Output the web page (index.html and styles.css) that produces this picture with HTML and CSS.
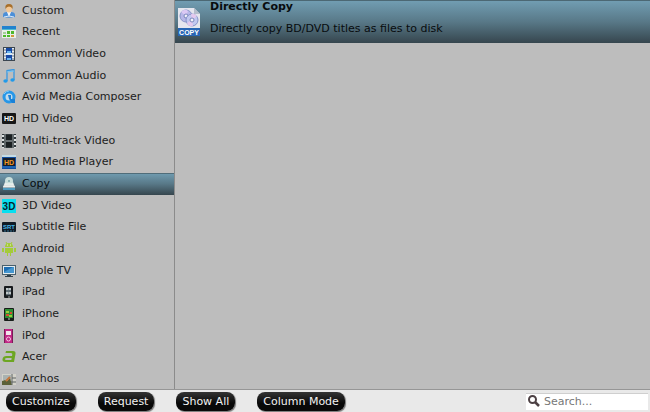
FILE: index.html
```html
<!DOCTYPE html>
<html lang="en">
<head>
  <meta charset="UTF-8">
  <meta name="viewport" content="width=device-width, initial-scale=1.0">
  <title>Output Profiles</title>
  <link rel="stylesheet" href="styles.css">
</head>
<body>
  <div class="content">
    <nav class="sidebar">
      <a href="#custom">
        <svg class="icon" viewBox="0 0 14 14"><path d="M1 13V11q0-3 4-3h4q4 0 4 3v2q-6 1.500-12 0z" fill="#4c8fd8"/><path d="M5 8l2 5 2-5z" fill="#f4f4f4"/><ellipse cx="7" cy="4.500" rx="3" ry="4" fill="#f3c795"/><path d="M3.500 5Q2.500 0 7 0t3.500 5Q9.500 2.500 7 2.500T3.500 5z" fill="#a8702c"/><path d="M2 13q5-2 10 0" stroke="#d6e8fa" fill="none"/></svg>
        Custom</a>
      <a href="#recent">
        <svg class="icon" viewBox="0 0 14 14"><path d="M0 1h14v12H0z" fill="#e9eee9"/><path d="M0 1h14v3H0z" fill="#2182cf"/><path d="M0 4h14v1H0z" fill="#4fbad0"/><path d="M5 6h3v3H5zM9 6h3v3H9zM1 10h3v2H1zM5 10h3v2H5z" fill="#4fb82c"/><path d="M1 7h3v2H1z" fill="#a5cf9a"/><path d="M9 10h3v2H9z" fill="#d2973c"/></svg>
        Recent</a>
      <a href="#video">
        <svg class="icon" viewBox="0 0 14 14"><path d="M1 0h12v14H1z" fill="#3c4651"/><path d="M2 1h2v12H2zM10 1h2v12h-2z" fill="#e8edf2"/><path d="M2 3h2M2 6h2M2 9h2M2 12h2M10 3h2M10 6h2M10 9h2M10 12h2" stroke="#69737d"/><path d="M4 1h6v5H4zM4 8h6v5H4z" fill="#1749a4"/><path d="M5 4h4v2H5zM5 11h4v2H5z" fill="#68b4ee"/><path d="M4 6h6v2H4z" fill="#d5e9fa"/></svg>
        Common Video</a>
      <a href="#audio">
        <svg class="icon" viewBox="0 0 14 14"><path d="M5 12V1.500l7-1V11" fill="none" stroke="#3798e2" stroke-width="1.300"/><path d="M5 3l7-1" stroke="#72c5f7"/><ellipse cx="3.500" cy="12" rx="2.200" ry="1.700" fill="#229ae9"/><ellipse cx="10.500" cy="11" rx="2.200" ry="1.700" fill="#229ae9"/></svg>
        Common Audio</a>
      <a href="#avid">
        <svg class="icon" viewBox="0 0 14 14"><circle cx="7" cy="7" r="5" fill="#c3dcec" stroke="#2797e8" stroke-width="3"/><path d="M6 5h3v4h4v4h-3L7 9z" fill="#1b82d8"/><path d="M2 4q2-3 5-3" stroke="#7ccaf7" fill="none"/></svg>
        Avid Media Composer</a>
      <a href="#hd">
        <svg class="icon" viewBox="0 0 14 14"><rect y="1" width="14" height="11" rx="1" fill="#171717"/><text class="glyph" x="7" y="9" fill="#fff">HD</text></svg>
        HD Video</a>
      <a href="#multi">
        <svg class="icon" viewBox="0 0 14 14"><path d="M0 0h14v14H0z" fill="#30373a"/><path d="M3 0v14M11 0v14" stroke="#929a9b"/><path d="M4 1h6v5H4zM4 8h6v5H4z" fill="#1b2022"/><path d="M4 7h6" stroke="#a3aaab"/><path d="M1 1v13M13 1v13" stroke="#dce0e0" stroke-width="2" stroke-dasharray="2 2"/></svg>
        Multi-track Video</a>
      <a href="#player">
        <svg class="icon" viewBox="0 0 14 14"><path d="M0 0h14v14H0z" fill="#124d9f"/><path d="M0 0h14v2H0z" fill="#c5dce6"/><path d="M1 3h12v8H1z" fill="#171c28"/><path d="M0 12h14" stroke="#287bc8"/><text class="glyph" x="7" y="10" fill="#f19821">HD</text></svg>
        HD Media Player</a>
      <a href="#copy" class="selected">
        <svg class="icon" viewBox="0 0 14 14"><path d="M3 5h8l2 5H1z" fill="#dfe4e2"/><circle cx="7" cy="4" r="4" fill="#c9dfdc"/><circle cx="7" cy="4" r="1" fill="#77a6aa"/><path d="M3 7h8M1 10h12" stroke="#f8faf9"/><path d="M1 12h12" stroke="#4f9cc0" stroke-width="2"/></svg>
        Copy</a>
      <a href="#3d">
        <svg class="icon" viewBox="0 0 14 14"><path d="M0 0h14v14H0z" fill="#08dfef"/><text class="glyph large" x="7" y="11" fill="#06252f">3D</text></svg>
        3D Video</a>
      <a href="#subtitle">
        <svg class="icon" viewBox="0 0 14 14"><rect y="2" width="14" height="10" rx="1" fill="#111b25"/><text class="glyph small" x="7" y="9" fill="#46b7e8">SRT</text><path d="M2 11h10" stroke="#347390" stroke-dasharray="2 1"/></svg>
        Subtitle File</a>
      <a href="#android">
        <svg class="icon" viewBox="0 0 14 14"><path d="M3 5q0-4 4-4t4 4zM3 6h8v5H9v3H8v-3H6v3H5v-3H3zM0 6h2v4H0zM12 6h2v4h-2z" fill="#a4cb39"/><path d="M4 0l1 2M10 0L9 2" stroke="#a4cb39"/><path d="M5 3h1M8 3h1" stroke="#e8f0ce"/></svg>
        Android</a>
      <a href="#appletv">
        <svg class="icon" viewBox="0 0 14 14"><path d="M0 1h14v10H0z" fill="#4a606c"/><path d="M1 2h12v8H1z" fill="#e5ecef"/><path d="M2 3h10v6H2z" fill="#1d6db2"/><path d="M2 8l9-5h1v6H2z" fill="#4596cf"/><path d="M5 11h4v1h2v1H3v-1h2z" fill="#31414a"/></svg>
        Apple TV</a>
      <a href="#ipad">
        <svg class="icon" viewBox="0 0 14 14"><rect x="2" y="1" width="9" height="12" rx="1" fill="#171a1d"/><path d="M4 3h5v7H4z" fill="#8f9da4"/><path d="M4 4h5M4 8h5" stroke="#f0efea" stroke-dasharray="2 1"/><path d="M4 6h5M4 10h5" stroke="#39444c"/><path d="M6 12h2" stroke="#a2a2a2"/></svg>
        iPad</a>
      <a href="#iphone">
        <svg class="icon" viewBox="0 0 14 14"><rect x="2" y="1" width="10" height="13" rx="1" fill="#171d19"/><path d="M3 2h8v9H3z" fill="#2e8c35"/><path d="M4 4h3v2H4zM7 8h3v2H7z" fill="#95cf3a"/><path d="M4 8h3M8 6h2" stroke="#d54f30" stroke-width="2"/><path d="M6 12h2" stroke="#c4c8c4"/></svg>
        iPhone</a>
      <a href="#ipod">
        <svg class="icon" viewBox="0 0 14 14"><path d="M2 0h9v14H2z" fill="#c02785"/><path d="M2 0h1v14H2zM10 0h1v14h-1z" fill="#7a1c57"/><path d="M4 2h5v4H4z" fill="#f1e4eb"/><circle cx="6.500" cy="10" r="2" fill="#c02785" stroke="#f6c6e1"/></svg>
        iPod</a>
      <a href="#acer">
        <svg class="icon" viewBox="0 0 14 14"><path fill-rule="evenodd" d="M4 1h7q3 0 2.500 3L12 12H3.500Q0 12 .5 9q.5-3 4-3H10l.3-1.500Q10.500 3 9 3H3.500zM9.700 8H5Q3 8 3 9t1 1h5.300z" fill="#6da622"/></svg>
        Acer</a>
      <a href="#archos">
        <svg class="icon" viewBox="0 0 14 14"><path d="M0 2h14v11H0z" fill="#d3d2c9"/><path d="M1 3h8v5H1z" fill="#a9b2b1"/><path d="M0 13V9l3-1 2 1 3-3 2 7z" fill="#5c6138"/><path d="M4 9l4-4" stroke="#c4773d" stroke-width="2"/><path d="M10 2v11M10 6h4M9 10h5" stroke="#5f6464"/></svg>
        Archos</a>
    </nav>

    <main class="formats">
      <a href="#directly-copy" class="format">
        <svg class="format-icon" viewBox="0 0 22 28">
          <path d="M0 0h16l6 6v22H0z" fill="#e5e6ee"/>
          <path d="M16 0v6h6z" fill="#b5bdcb"/>
          <circle cx="8" cy="8" r="6" fill="#b8b7e8" stroke="#8996c9"/>
          <path d="M8 8L3 4q4-4 7-1z" fill="#dcc9f4"/>
          <circle cx="8" cy="8" r="2" fill="#f3f3fa" stroke="#7984bc"/>
          <circle cx="14" cy="12" r="6" fill="#c2c8f0" stroke="#8793c9"/>
          <path d="M14 12l-5 3q2 4 6 3zM14 12l5-4q-3-3-6-2z" fill="#e5c9ee"/>
          <circle cx="14" cy="12" r="2" fill="#f5f5fb" stroke="#7984bc"/>
          <path d="M0 20h22v8H0z" fill="#2866b5"/>
          <text class="glyph" x="11" y="27" fill="#fff">COPY</text>
        </svg>
        <span class="format-text">
          <strong>Directly Copy</strong>
          <span>Directly copy BD/DVD titles as files to disk</span>
        </span>
      </a>
    </main>
  </div>

  <footer class="toolbar">
    <button type="button">Customize</button>
    <button type="button">Request</button>
    <button type="button">Show All</button>
    <button type="button">Column Mode</button>
    <label class="search">
      <svg class="search-icon" viewBox="0 0 12 12"><circle cx="4.500" cy="4.500" r="3.500" fill="none" stroke="#4d4144" stroke-width="2"/><path d="M7 7l4 4" stroke="#4d4144" stroke-width="2.500"/></svg>
      <input type="text" placeholder="Search..." aria-label="Search">
    </label>
  </footer>
</body>
</html>
```
FILE: styles.css
```css
* {
  box-sizing: border-box;
}

body {
  margin: 0;
  height: 100vh;
  display: flex;
  flex-direction: column;
  overflow: hidden;
  background: #bdbdbd;
  color: #1c1c1c;
  font-family: "DejaVu Sans", Verdana, sans-serif;
  font-size: 11px;
}

a {
  color: inherit;
  text-decoration: none;
}

.content {
  flex: 1;
  min-height: 0;
  display: flex;
}

.sidebar {
  width: 27%;
  min-width: 160px;
  max-width: 175px;
  margin-bottom: -1px;
  display: grid;
  grid-auto-rows: 1fr;
  border-right: 1px solid #8b8b8b;
}

.sidebar a {
  display: flex;
  align-items: center;
  gap: 6px;
  padding-left: 2px;
  line-height: 20px;
  white-space: nowrap;
}

.sidebar .selected,
.format {
  background: linear-gradient(#719db2, #587887 50%, #36464e);
  color: #080c0e;
}

.sidebar .selected {
  box-shadow: inset 0 1px #506d7a;
}

.icon {
  width: 14px;
  height: 14px;
  flex: none;
}

.glyph {
  font: bold 7px "Liberation Sans", Arial, sans-serif;
  text-anchor: middle;
}

.glyph.small {
  font-size: 6px;
}

.glyph.large {
  font-size: 10px;
}

.formats {
  flex: 1;
  min-width: 0;
}

.format {
  display: flex;
  align-items: center;
  gap: 10px;
  height: 43px;
  padding-left: 3px;
  border-top: 1px solid #4c6874;
}

.format-icon {
  width: 22px;
  height: 28px;
  flex: none;
}

.format-text {
  display: flex;
  flex-direction: column;
  padding-bottom: 8px;
  line-height: 22px;
}

.toolbar {
  position: relative;
  height: 23px;
  display: flex;
  align-items: center;
  gap: 22px;
  padding: 0 2px 0 6px;
  border-top: 1px solid #969696;
  background: #e9e9e9;
}

.toolbar button {
  height: 19px;
  padding: 0 6px;
  border: 0;
  border-radius: 8px;
  background: linear-gradient(#343434, #090909 60%);
  box-shadow: 1px 1px 1px #777;
  color: #f2f2f2;
  font: inherit;
  white-space: nowrap;
}

.search {
  width: 122px;
  height: 17px;
  margin-left: auto;
  display: flex;
  align-items: center;
  gap: 4px;
  padding-left: 2px;
  background: #fff;
  box-shadow: inset 0 1px #cfcfcf;
}

.search-icon {
  width: 12px;
  height: 12px;
  flex: none;
}

.search input {
  min-width: 0;
  flex: 1;
  padding: 0;
  border: 0;
  outline: 0;
  background: transparent;
  font: inherit;
}

.search input::placeholder {
  color: #777;
  opacity: 1;
}
```
